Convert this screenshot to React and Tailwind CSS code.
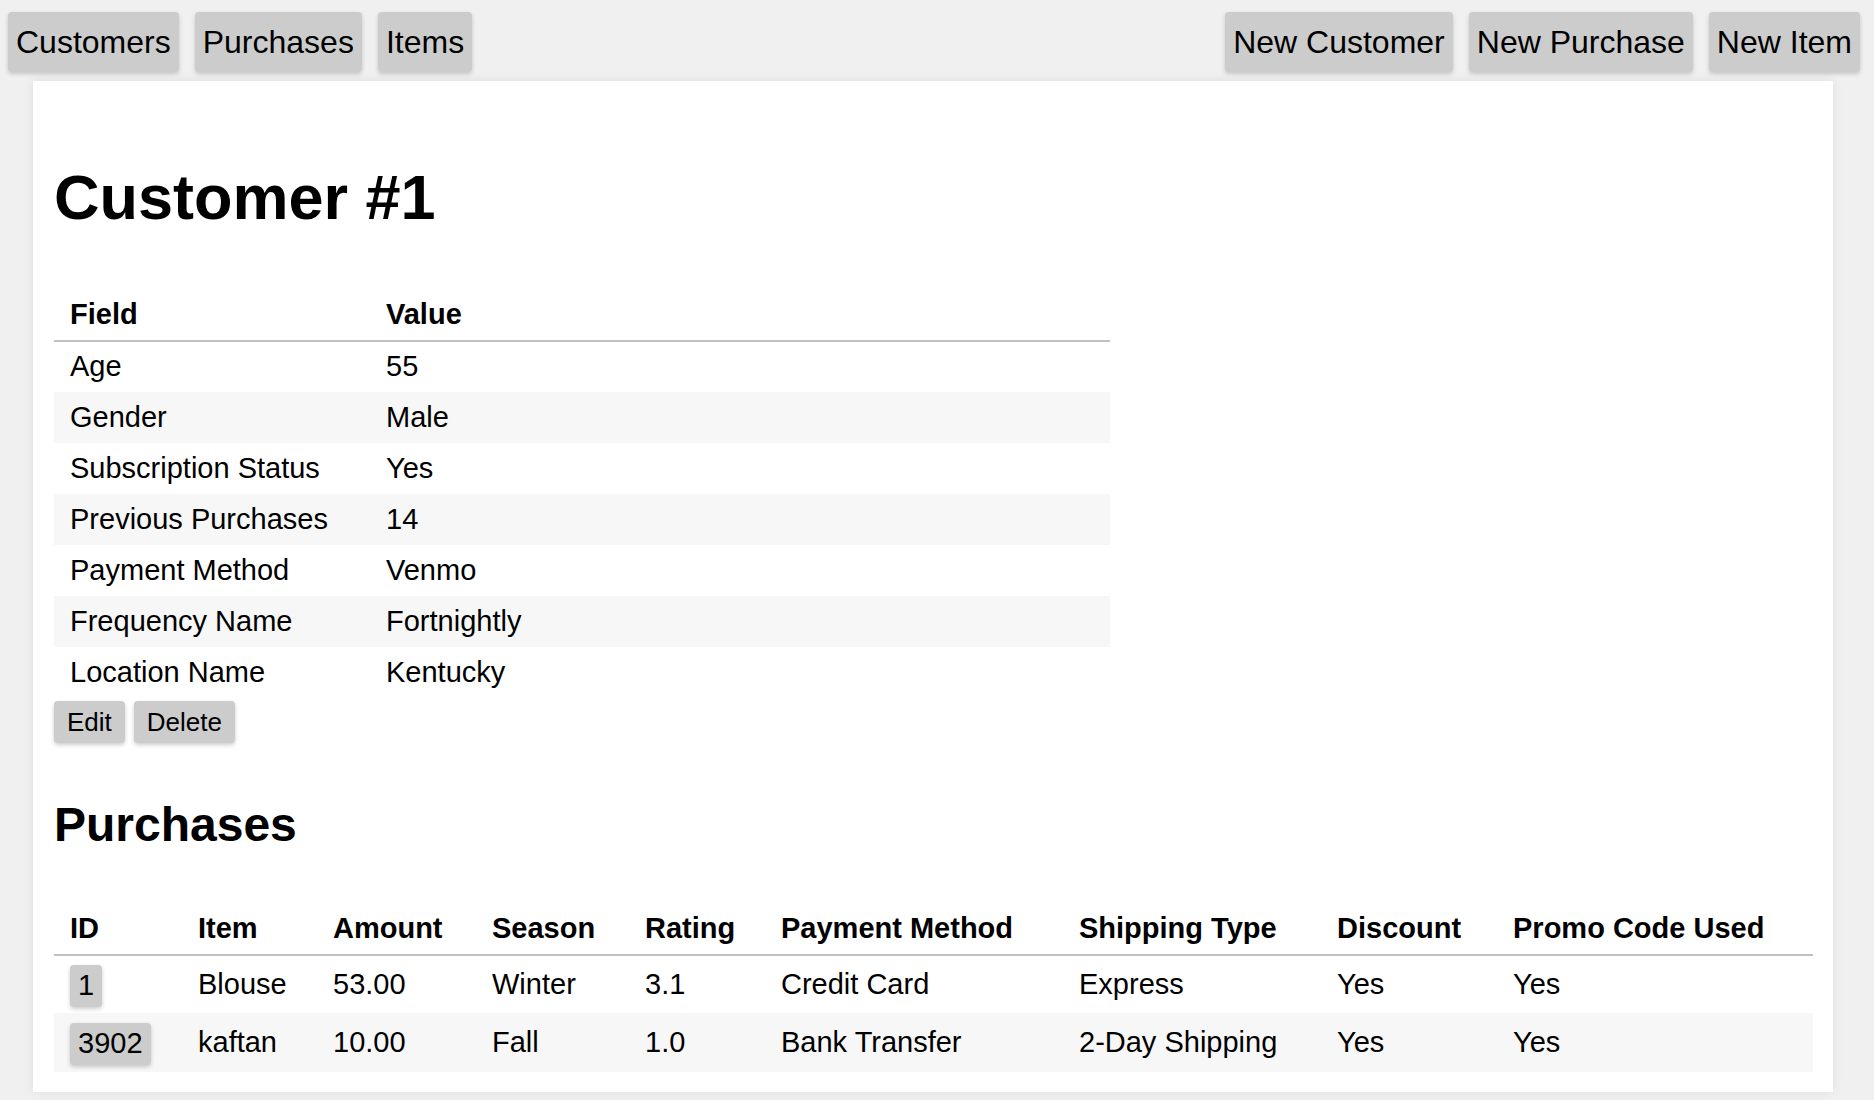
import React from 'react';

const customer = [
  ['Age', '55'],
  ['Gender', 'Male'],
  ['Subscription Status', 'Yes'],
  ['Previous Purchases', '14'],
  ['Payment Method', 'Venmo'],
  ['Frequency Name', 'Fortnightly'],
  ['Location Name', 'Kentucky'],
];

const purchaseCols = [
  ['ID', 'w-[128px]'],
  ['Item', 'w-[135px]'],
  ['Amount', 'w-[159px]'],
  ['Season', 'w-[153px]'],
  ['Rating', 'w-[136px]'],
  ['Payment Method', 'w-[298px]'],
  ['Shipping Type', 'w-[258px]'],
  ['Discount', 'w-[176px]'],
  ['Promo Code Used', 'w-[316px]'],
];

const purchases = [
  { id: 1, item: 'Blouse', amount: '53.00', season: 'Winter', rating: '3.1', payment: 'Credit Card', shipping: 'Express', discount: 'Yes', promo: 'Yes' },
  { id: 3902, item: 'kaftan', amount: '10.00', season: 'Fall', rating: '1.0', payment: 'Bank Transfer', shipping: '2-Day Shipping', discount: 'Yes', promo: 'Yes' },
];

const NavButton = ({ children }) => (
  <button className="h-[60px] px-2 bg-[#cccccc] rounded-[4px] shadow-[0_2px_4px_rgba(0,0,0,0.18)] text-[32px] leading-none text-black">
    {children}
  </button>
);

const SmallButton = ({ children }) => (
  <button className="h-[42px] px-[13px] bg-[#cccccc] rounded-[4px] shadow-[0_2px_4px_rgba(0,0,0,0.2)] text-[26px] leading-none text-black">
    {children}
  </button>
);

export default function App() {
  return (
    <div className="min-h-screen bg-[#f0f0f0] font-['Liberation_Sans',Arial,sans-serif] text-black">
      {/* Top nav */}
      <div className="flex justify-between pt-3 pl-2 pr-[14px]">
        <div className="flex gap-4">
          <NavButton>Customers</NavButton>
          <NavButton>Purchases</NavButton>
          <NavButton>Items</NavButton>
        </div>
        <div className="flex gap-4">
          <NavButton>New Customer</NavButton>
          <NavButton>New Purchase</NavButton>
          <NavButton>New Item</NavButton>
        </div>
      </div>

      {/* Card */}
      <div className="mt-[9px] ml-[33px] w-[1800px] bg-white shadow-[0_0_10px_rgba(0,0,0,0.08)] px-[21px] pt-[85px] pb-[20px]">
        <h1 className="text-[63px] leading-none font-bold">Customer #1</h1>

        <table className="mt-[60px] w-[1056px] table-fixed border-collapse text-[29px]">
          <thead>
            <tr className="h-[52px] border-b-2 border-[#c0c0c0]">
              <th className="w-[316px] pl-4 text-left font-bold">Field</th>
              <th className="pl-4 text-left font-bold">Value</th>
            </tr>
          </thead>
          <tbody>
            {customer.map(([k, v], i) => (
              <tr key={k} className={`h-[51px] ${i % 2 === 1 ? 'bg-[#f7f7f7]' : 'bg-white'}`}>
                <td className="pl-4">{k}</td>
                <td className="pl-4">{v}</td>
              </tr>
            ))}
          </tbody>
        </table>

        <div className="mt-[3px] flex gap-[9px]">
          <SmallButton>Edit</SmallButton>
          <SmallButton>Delete</SmallButton>
        </div>

        <h2 className="mt-[58px] text-[48px] leading-none font-bold">Purchases</h2>

        <table className="mt-[54px] w-full table-fixed border-collapse text-[29px]">
          <thead>
            <tr className="h-[52px] border-b-2 border-[#c0c0c0]">
              {purchaseCols.map(([label, w]) => (
                <th key={label} className={`${w} pl-4 text-left font-bold whitespace-nowrap`}>{label}</th>
              ))}
            </tr>
          </thead>
          <tbody>
            {purchases.map((p, i) => (
              <tr key={p.id} className={`${i % 2 === 1 ? 'h-[59px] bg-[#f7f7f7]' : 'h-[58px] bg-white'}`}>
                <td className="pl-4">
                  <span className="inline-flex h-[42px] items-center px-2 bg-[#cccccc] rounded-[4px] shadow-[0_2px_4px_rgba(0,0,0,0.2)] align-middle">
                    {p.id}
                  </span>
                </td>
                <td className="pl-4">{p.item}</td>
                <td className="pl-4">{p.amount}</td>
                <td className="pl-4">{p.season}</td>
                <td className="pl-4">{p.rating}</td>
                <td className="pl-4 whitespace-nowrap">{p.payment}</td>
                <td className="pl-4 whitespace-nowrap">{p.shipping}</td>
                <td className="pl-4">{p.discount}</td>
                <td className="pl-4">{p.promo}</td>
              </tr>
            ))}
          </tbody>
        </table>
      </div>
    </div>
  );
}
